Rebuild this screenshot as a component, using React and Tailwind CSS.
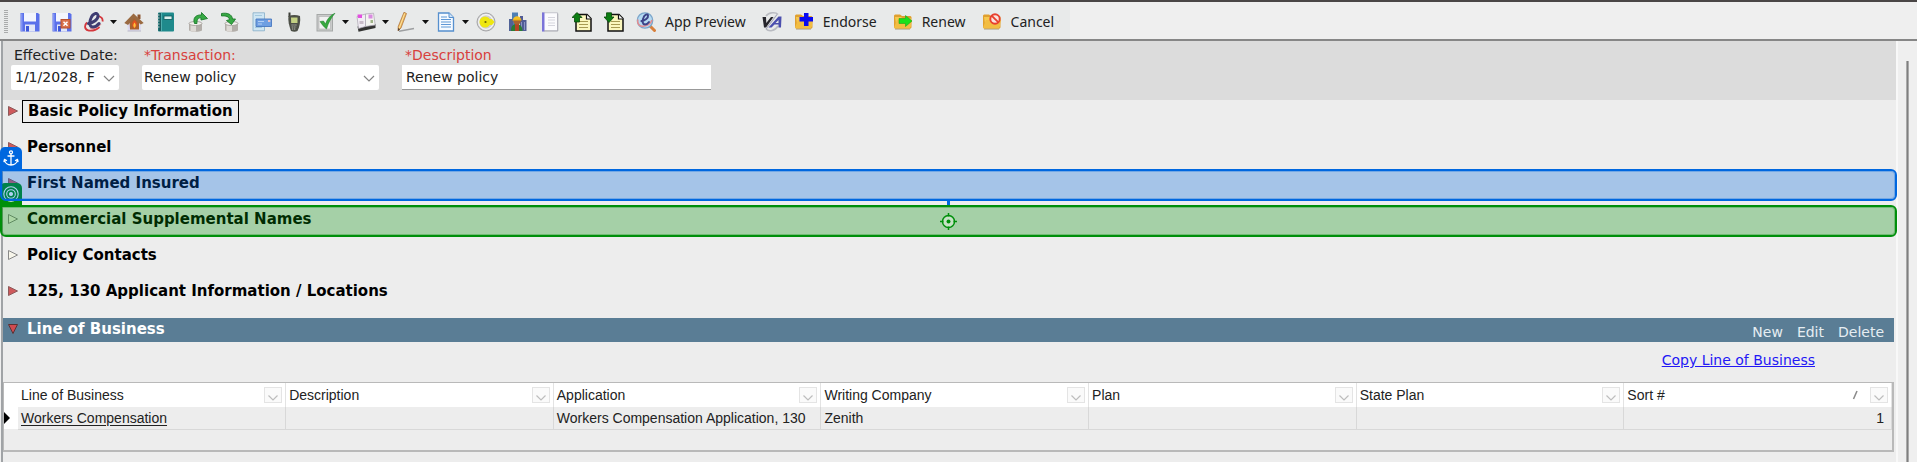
import React from "react";

function Icon({ children }) {
  return (
    <svg viewBox="0 0 20 20" className="h-5 w-5 shrink-0" aria-hidden="true">
      {children}
    </svg>
  );
}

const Floppy = () => (
  <>
    <path d="M0.5 1H18l1.500 1.500V19.500H0.500z" fill="#5a70ea" />
    <path d="M1 1.500h1.500v17.500H1z" fill="#8496f5" />
    <rect x="4" y="1" width="12" height="8.500" fill="#f3f5fd" />
    <rect x="5" y="12.500" width="10" height="7" fill="#e3e7f7" />
    <rect x="6" y="14" width="3" height="5.500" fill="#3f58d8" />
  </>
);

const FolderBase = () => (
  <>
    <path d="M1 3.500l1-1h5l2 1.500h8.500l1 1V15.500l-1.500 1.500H2.500L1 15.500z" fill="#e0a030" />
    <path d="M2 5h6l2 1.500h8v8L3.500 16z" fill="#f6c950" />
    <path d="M1 15.500L4 8h15l-2 8.500H2z" fill="#f2bd42" />
    <path d="M2 17.200h15" stroke="#b9b09a" strokeWidth="1" />
  </>
);

const NotePage = () => (
  <>
    <path d="M4 2.500h11l4 4V19H4z" fill="#fbf7bd" stroke="#111" strokeWidth="1.500" />
    <path d="M14.500 2.500V7H19" fill="#fff" stroke="#111" strokeWidth="1.200" />
    <path d="M7 9.500h9M7 12.500h9M7 15.500h9" stroke="#a89b52" strokeWidth="1.100" />
  </>
);

const Cylinder = () => (
  <>
    <path d="M1 11.500v7c2.500 1.800 10.500 1.800 13 0v-7z" fill="#b3aea9" />
    <path d="M2.500 12v7c2 .8 4 .8 5.500 .6V12.500z" fill="#dedad6" />
    <ellipse cx="7.500" cy="11.500" rx="6.500" ry="2" fill="#f4f1ee" stroke="#9c9893" strokeWidth=".8" />
  </>
);

const icons = {
  save: <Floppy />,
  saveClose: (
    <>
      <Floppy />
      <rect x="8.500" y="7" width="10" height="9.500" rx=".5" fill="#b8502f" />
      <rect x="9.500" y="8" width="8" height="7.500" fill="#d9714c" />
      <path d="M11.500 9.700l4 4M15.500 9.700l-4 4" stroke="#fff" strokeWidth="1.500" />
    </>
  ),
  engine: (
    <>
      <path d="M3 10.500c-3 3-2.500 7 1.500 8 4 .7 8-.8 11-3.500M14.500 4c3 1 4.500 3 4 5.500" fill="none" stroke="#d5383d" strokeWidth="1.800" />
      <path d="M6 16.300c4 1 8-.8 11-4.500" fill="none" stroke="#eba0a1" strokeWidth="1.200" />
      <path d="M4.500 11.500C9 11 14.500 7.500 14 3.500 13.500 0 9 1 7 6c-2 4.500-1.500 9 2 9 2.500 0 4.500-1.500 6-3.500" fill="none" stroke="#3f3d72" strokeWidth="3" strokeLinecap="round" />
    </>
  ),
  home: (
    <>
      <path d="M3 10l7-6 7 6v8.500l-13 .5z" fill="#dcdaf0" />
      <path d="M13.500 2.500h3V7h-3z" fill="#8e5630" />
      <path d="M5.500 9L10 5l5 4.500v8H6z" fill="#a8622f" />
      <path d="M.3 11L9.500 1.500 19.700 11l-3 1.500L10 6.500 4 13z" fill="#9a6b42" />
      <path d="M10.500 8c3 2.500 3 6 0 8.500-3-2-3-5.500 0-8.500z" fill="#e8501d" />
      <path d="M10.500 10.500c1.800 2 1.600 4 0 5.500-1.600-1.500-1.600-3.500 0-5.500z" fill="#fcc23b" />
      <path d="M3.500 19h13.500" stroke="#b8b7c6" />
    </>
  ),
  book: (
    <>
      <rect x="2" y=".5" width="16" height="19" rx="1" fill="#1f8a8c" />
      <path d="M2.500 1H5v18H2.500z" fill="#1a5f62" />
      <path d="M5.500 1v18" stroke="#5bb8b8" strokeWidth=".8" />
      <rect x="8" y="4" width="8" height="3.500" fill="#d9efec" stroke="#0c5659" strokeWidth=".8" />
      <path d="M1 3h2.500M1 6h2.500M1 9h2.500M1 12h2.500M1 15h2.500" stroke="#c8d3d3" strokeWidth="1" />
    </>
  ),
  databaseOut: (
    <>
      <Cylinder />
      <path d="M6.500 11.500C4.500 6 8 2.500 13.500 3V.5l6 6-6.500 1.500V5.800C10.500 5.500 8.500 7.500 9 11.500z" fill="#37a944" stroke="#1c7a2b" strokeWidth=".9" />
    </>
  ),
  databaseIn: (
    <>
      <g transform="translate(4 0)">
        <Cylinder />
      </g>
      <path d="M1.500 1.500C7 .5 12 2 12.500 7h3L11.500 12.500 6.500 8.500l3-.8C9 4.500 6 3.500 1.500 4z" fill="#37a944" stroke="#1c7a2b" strokeWidth=".9" />
    </>
  ),
  printer: (
    <>
      <path d="M1 .8h11.500v18H1z" fill="#cfe6f3" stroke="#8db4cc" strokeWidth=".9" />
      <path d="M3 3.500h7M3 15.500h7" stroke="#a3c8de" strokeWidth="1" />
      <path d="M4 7h15.500v7.500H4z" fill="#6f9fe2" stroke="#4878bf" strokeWidth=".9" />
      <path d="M6 9.500h6M6 12h4" stroke="#b4d0f5" strokeWidth="1" />
      <rect x="16" y="8" width="2.300" height="2" fill="#e9c5c8" />
    </>
  ),
  phone: (
    <>
      <path d="M4.500 .5h2V5h-2z" fill="#3b3d37" />
      <path d="M4.500 4c3.500-1.500 8-1.500 11.500 0 .8 5-.5 11-2.500 15-2 1-4 1-6.500 0C5 14 3.800 8 4.500 4z" fill="#4d5047" />
      <path d="M7 5.500h6.500V11H7.200z" fill="#c3d183" />
      <path d="M7.500 13h5M7.700 15h4.500M8 17h4" stroke="#b8bab2" strokeWidth="1" strokeDasharray="1.200 .7" />
    </>
  ),
  check: (
    <>
      <rect x="1" y="2.500" width="15.500" height="16.500" fill="#c9cbca" stroke="#a5a8a7" />
      <rect x="3" y="4.500" width="11.500" height="12.500" fill="#f1f1f1" stroke="#b0b0b0" strokeWidth=".6" />
      <path d="M4 9.500l3.500-.5 2 3C11 7 14.500 3 19 1.200 15 6 12.500 10.500 10.500 17 8 15 6 12.500 4 9.500z" fill="#36a83f" stroke="#1c7d2b" strokeWidth=".5" />
    </>
  ),
  catalog: (
    <>
      <path d="M1.500 14.500l8.500-2 9.500-.5V16L2.500 19.700z" fill="#333432" />
      <path d="M1 4.500l8.500-2.500v12.500l-7 2z" fill="#f1edf4" stroke="#a9a3b0" strokeWidth=".7" />
      <path d="M9.500 2l8-.8L19.200 13l-9.700 1.500z" fill="#f3f4f0" stroke="#a9a3b0" strokeWidth=".7" />
      <path d="M1.500 2.500h4.500v3.500H2z" fill="#e34fe0" />
      <path d="M12.500 2.500h4v4h-4z" fill="#d98be0" />
      <path d="M14.500 8H17v3h-2.500z" fill="#9fb387" />
      <path d="M3.500 9h4v3h-4z" fill="#c9bcc9" />
    </>
  ),
  pencil: (
    <>
      <path d="M8 .2l2.500 1.300L5 16 2 19l.2-4.500z" fill="#efb356" stroke="#a9713a" strokeWidth=".7" />
      <path d="M8.700 1.500L3.300 16" stroke="#fbe6a5" strokeWidth="1" />
      <path d="M2 19l.2-3L4 17.300z" fill="#4a3a35" />
      <path d="M3 19.200l15-2.700" stroke="#9d9fa1" strokeWidth="1.400" />
    </>
  ),
  document: (
    <>
      <path d="M2.500 1H13l4.500 4.500V19h-15z" fill="#f5faff" stroke="#5690ce" strokeWidth="1.300" />
      <path d="M13 1v4.500h4.500" fill="#cfe3f7" stroke="#5690ce" />
      <path d="M5 5h6M5 7.500h10M5 10h10M5 12.500h10M5 15h10" stroke="#5f98d6" strokeWidth="1.200" />
    </>
  ),
  target: (
    <>
      <circle cx="10" cy="10" r="9" fill="#cfcfd2" stroke="#a5a6a8" strokeWidth="1" />
      <circle cx="10" cy="10" r="7.300" fill="none" stroke="#f7f7f7" strokeWidth="1.200" />
      <circle cx="9" cy="10" r="5.500" fill="#eee711" />
      <path d="M9 7h7l2.500 3-2.500 3H9z" fill="#eee711" />
      <circle cx="9.500" cy="10" r="1.100" fill="#6a6408" />
    </>
  ),
  business: (
    <>
      <path d="M4 .5h6V16H4z" fill="#4e7fb4" />
      <path d="M12 4h3v4h3.500v11H12z" fill="#515c96" />
      <path d="M1 7h4v12H1z" fill="#4f6297" />
      <path d="M13.500 10v8M16.500 10v8" stroke="#9ba5cf" strokeWidth=".8" />
      <path d="M3 19c0-5 2-7 5.500-7s6 2.500 6 7z" fill="#2b7c35" />
      <path d="M7 12h4v7H7z" fill="#b34425" />
      <circle cx="9" cy="9" r="3.600" fill="#a9632f" />
      <path d="M5 8c.3-5 7.700-5 8.200 0z" fill="#f6c325" />
      <path d="M4.500 8.200h9" stroke="#d79b16" strokeWidth="1" />
    </>
  ),
  notebook: (
    <>
      <rect x="2.500" y=".8" width="15" height="18" fill="#fbfbfd" stroke="#b9bac4" strokeWidth=".8" />
      <path d="M2 .5h2.500v19H2z" fill="#7b74d9" />
      <path d="M8 5.500h7M8 8h7M8 11h7M8 13.500h7" stroke="#d5d5dd" strokeWidth="1" />
      <path d="M17.800 1.500V19H4" fill="none" stroke="#a5a6ad" strokeWidth=".8" />
    </>
  ),
  pageUp: (
    <>
      <NotePage />
      <path d="M5 .5L10 5.500H7.500V10h-5V5.500H0z" fill="#0b7d12" stroke="#064808" strokeWidth=".8" />
    </>
  ),
  pageDown: (
    <>
      <NotePage />
      <path d="M2.500 .8h5V5H10l-5 5.500L0 5h2.500z" fill="#0b7d12" stroke="#064808" strokeWidth=".8" />
    </>
  ),
  preview: (
    <>
      <path d="M13 13l5.500 5.500" stroke="#d9803c" strokeWidth="3" strokeLinecap="round" />
      <circle cx="9" cy="8.500" r="7.700" fill="#b5daf2" stroke="#7ba6cb" strokeWidth="1.300" />
      <path d="M2 7.500c-1 3 .5 6 3 6.500 5 1 10-2 11-6" fill="none" stroke="#e58c8f" strokeWidth="1.500" />
      <path d="M5.500 9C9 8.500 12.500 6 12 3.500 11.500 1.500 8.500 2.500 7.300 6 6 9.500 6.500 12.500 9 12.500c1.700 0 3-1 4-2.500" fill="none" stroke="#3d4488" strokeWidth="2" strokeLinecap="round" />
    </>
  ),
  compare: (
    <>
      <path d="M4 4C7 0 14 0 16 2.500M4 17c3 3 9 2 12-3" fill="none" stroke="#b9bbc1" strokeWidth="1.500" />
      <path d="M.5 5h3.500l.3 6L9 5h2.500L4 15.500H2z" fill="#26262c" />
      <path d="M6.500 15.500L16.500 4.500H19.500l-.5 11h-2.500v-3h-4L9.500 15.500zM16.500 8L13.500 11h3z" fill="#4b4fae" />
      <path d="M4 17L15 2.500" stroke="#a5a7b8" strokeWidth="1.100" />
    </>
  ),
  endorse: (
    <>
      <FolderBase />
      <path d="M10 1h4.500v4H19v4.500h-4.500V14H10V9.500H5.500V5H10z" fill="#0a0af0" />
    </>
  ),
  renew: (
    <>
      <FolderBase />
      <path d="M6 6.500h6.500V3.500L19 9l-6.500 5.500v-3H6z" fill="#19e21b" stroke="#1fa11f" strokeWidth=".6" />
    </>
  ),
  cancel: (
    <>
      <FolderBase />
      <circle cx="13" cy="7" r="4.700" fill="#fbe3df" stroke="#e8402f" strokeWidth="1.900" />
      <path d="M9.800 3.900l6.400 6.200" stroke="#e8402f" strokeWidth="1.900" />
    </>
  ),
};

const tools = [
  { icon: "save", label: "Save" },
  { icon: "saveClose", label: "Save and close" },
  { icon: "engine", label: "Actions", menu: true },
  { icon: "home", label: "Home" },
  { icon: "book", label: "Manual" },
  { icon: "databaseOut", label: "Export" },
  { icon: "databaseIn", label: "Import" },
  { icon: "printer", label: "Print" },
  { icon: "phone", label: "Call" },
  { icon: "check", label: "Tasks", menu: true },
  { icon: "catalog", label: "Catalog", menu: true },
  { icon: "pencil", label: "Edit", menu: true },
  { icon: "document", label: "Documents", menu: true },
  { icon: "target", label: "Status" },
  { icon: "business", label: "Business" },
  { icon: "notebook", label: "Notes" },
  { icon: "pageUp", label: "Upload" },
  { icon: "pageDown", label: "Download" },
  { icon: "preview", text: "App Preview" },
  { icon: "compare", label: "Compare" },
  { icon: "endorse", text: "Endorse" },
  { icon: "renew", text: "Renew" },
  { icon: "cancel", text: "Cancel" },
];

function Tool({ tool }) {
  if (tool.text) {
    return (
      <button className="flex shrink-0 items-center gap-[9px] pr-4 text-[14px] leading-5 whitespace-nowrap text-[#222]">
        <Icon>{icons[tool.icon]}</Icon>
        {tool.text}
      </button>
    );
  }
  return (
    <button
      aria-label={tool.label}
      className={tool.menu ? "flex w-10 shrink-0 items-center gap-[6px]" : "flex w-8 shrink-0 items-center"}
    >
      <Icon>{icons[tool.icon]}</Icon>
      {tool.menu && (
        <svg viewBox="0 0 7 4" className="h-1 w-[7px]" aria-hidden="true">
          <path d="M0 0h7L3.500 4z" fill="#111" />
        </svg>
      )}
    </button>
  );
}

function Toolbar() {
  return (
    <header className="flex h-[41px] border-t-2 border-b-2 border-t-[#4a4646] border-b-[#868686] bg-[#efefef] font-['Noto_Sans','Open_Sans',sans-serif]">
      <div className="flex items-center bg-[#e8eaea] pt-[2px] pl-1">
        <span className="mr-3 h-6 w-1 bg-[repeating-linear-gradient(to_bottom,#a9abab_0_1px,#e8eaea_1px_2px)]" />
        {tools.map((tool) => (
          <Tool key={tool.icon} tool={tool} />
        ))}
      </div>
    </header>
  );
}

function Chevron() {
  return (
    <svg viewBox="0 0 12 7" className="pointer-events-none absolute top-[10px] right-1 h-[7px] w-3" aria-hidden="true">
      <path d="M1 1l5 5 5-5" fill="none" stroke="#858585" strokeWidth="1.200" />
    </svg>
  );
}

function PolicyForm() {
  return (
    <form className="flex gap-[23px] bg-[#dcdcdc] pt-1 pb-[10px] pl-2 text-[#222]">
      <div>
        <label htmlFor="effective" className="block pl-[3px] leading-5 whitespace-nowrap">
          Effective Date:
        </label>
        <div className="relative w-[108px]">
          <select id="effective" className="h-[25px] w-full appearance-none rounded-xs bg-white pr-6 pl-1">
            <option>1/1/2028, F</option>
          </select>
          <Chevron />
        </div>
      </div>
      <div>
        <label htmlFor="transaction" className="block pl-[2px] leading-5 text-[#d8403c]">
          *Transaction:
        </label>
        <div className="relative w-[237px]">
          <select id="transaction" className="h-[25px] w-full appearance-none rounded-xs bg-white pr-6 pl-[2px]">
            <option>Renew policy</option>
          </select>
          <Chevron />
        </div>
      </div>
      <div>
        <label htmlFor="description" className="block pl-[3px] leading-5 text-[#d8403c]">
          *Description
        </label>
        <input
          id="description"
          defaultValue="Renew policy"
          className="block h-[25px] w-[309px] border-b border-[#999] bg-white px-1"
        />
      </div>
    </form>
  );
}

function Marker({ kind }) {
  if (kind === "open") {
    return (
      <svg viewBox="0 0 12 12" className="h-3 w-3 shrink-0" aria-hidden="true">
        <path d="M.500 1.500h9L5 10.500z" fill="#cf4b50" stroke="#5c3234" />
      </svg>
    );
  }
  return (
    <svg viewBox="0 0 12 12" className="h-3 w-3 shrink-0" aria-hidden="true">
      {kind === "filled" ? (
        <path d="M.500 1.500l9 4.500-9 4.500z" fill="#cf5a5c" stroke="#8d5a5b" />
      ) : (
        <path d="M.500 1.500l9 4.500-9 4.500z" fill="#f7f5ea" stroke="#888" />
      )}
    </svg>
  );
}

function SectionTitle({ kind, focused, children }) {
  return (
    <h2>
      <button className="flex gap-[2px] pl-[5px] text-left text-[15px] font-bold whitespace-nowrap">
        <span className="pt-[5px]">
          <Marker kind={kind} />
        </span>
        <span className={focused ? "border border-black px-[5px] pb-px leading-5" : "border border-transparent px-1 pb-px leading-5"}>
          {children}
        </span>
      </button>
    </h2>
  );
}

function AnchorHighlight() {
  return (
    <div className="pointer-events-none absolute -top-[25px] -right-px -left-[3px] z-20">
      <div className="flex h-[22px] w-[22px] items-center justify-center rounded-t-[5px] bg-[#0067df]">
        <svg viewBox="0 0 16 16" className="h-4 w-4" fill="none" stroke="#fff" strokeWidth="1.300" strokeLinecap="round" strokeLinejoin="round">
          <circle cx="8" cy="2.300" r="1.500" />
          <path d="M8 3.800V15M5 6h6M1.500 9.500c.3 3.300 3 5.500 6.500 5.500s6.200-2.200 6.500-5.500M1 11.500l.5-2.200 2 1.200M15 11.500l-.5-2.200-2 1.200" />
        </svg>
      </div>
      <div className="h-8 rounded-[6px] rounded-tl-none border-2 border-[#0067df] bg-[#0067df]/30 bg-clip-padding shadow-[inset_0_0_0_1px_rgba(0,103,223,0.300)]" />
      <div className="mx-auto h-1 w-[3px] bg-[#0067df]" />
    </div>
  );
}

function TargetHighlight() {
  return (
    <div className="pointer-events-none absolute -top-[25px] -right-px -left-[3px] z-10">
      <div className="flex h-[22px] w-[22px] items-center justify-center rounded-t-[5px] bg-[#008f0b]">
        <svg viewBox="0 0 16 16" className="h-4 w-4" fill="none" stroke="#fff" strokeWidth="1.100">
          <circle cx="8" cy="8" r="7.200" />
          <circle cx="8" cy="8" r="4.300" />
          <circle cx="8" cy="8" r="1.500" fill="#fff" />
        </svg>
      </div>
      <div className="flex h-8 items-center justify-center rounded-[6px] rounded-tl-none border-2 border-[#008f0b] bg-[#009008]/30 bg-clip-padding shadow-[inset_0_0_0_1px_rgba(0,144,8,0.300)]">
        <svg viewBox="0 0 17 17" className="h-[17px] w-[17px]" fill="none" stroke="#008f0b" strokeWidth="1.500">
          <circle cx="8.500" cy="8.500" r="6" fill="#c6e2c6" />
          <path d="M8.500 0v3.500M8.500 13.500V17M0 8.500h3.500M13.500 8.500H17" />
          <circle cx="8.500" cy="8.500" r="2" fill="#008f0b" stroke="none" />
        </svg>
      </div>
    </div>
  );
}

const sections = [
  { title: "Basic Policy Information", kind: "filled", focused: true },
  { title: "Personnel", kind: "filled" },
  { title: "First Named Insured", kind: "filled", highlight: <AnchorHighlight /> },
  { title: "Commercial Supplemental Names", kind: "hollow", highlight: <TargetHighlight /> },
  { title: "Policy Contacts", kind: "hollow" },
  { title: "125, 130 Applicant Information / Locations", kind: "filled" },
];

const columns = ["Line of Business", "Description", "Application", "Writing Company", "Plan", "State Plan", "Sort #"];

function BusinessTable() {
  return (
    <div className="mr-[2px] border-t border-r-2 border-b-2 border-l border-[#b9b9b9] pb-5 font-['Liberation_Sans',Arial,sans-serif] text-[14px] text-[#222]">
      <table className="w-full table-fixed border-collapse">
        <thead>
          <tr className="h-6 bg-white">
            <th className="w-[14px] p-0" aria-label="Current row" />
            {columns.map((name) => (
              <th key={name} className="border-r border-[#e3e3e3] p-0 text-left font-normal">
                <div className="flex items-center pr-[3px] pl-[3px]">
                  <span className="flex-1 leading-6">{name}</span>
                  {name === "Sort #" && (
                    <svg viewBox="0 0 6 10" className="mr-3 h-[10px] w-[6px]" aria-hidden="true">
                      <path d="M5 1L1.500 9" stroke="#8a8a8a" strokeWidth="1.500" />
                    </svg>
                  )}
                  <button
                    aria-label={"Filter " + name}
                    className="flex h-4 w-[18px] items-end justify-center border border-[#e4e4e4] bg-[#fafafa] pb-px"
                  >
                    <svg viewBox="0 0 10 6" className="h-[6px] w-[10px]" aria-hidden="true">
                      <path d="M.500 .500L5 5 9.500 .500" fill="none" stroke="#bdbdbd" strokeWidth="1.200" />
                    </svg>
                  </button>
                </div>
              </th>
            ))}
          </tr>
        </thead>
        <tbody>
          <tr className="h-[22px]">
            <td className="bg-white p-0">
              <svg viewBox="0 0 6 12" className="h-3 w-[6px]" aria-hidden="true">
                <path d="M0 0l6 6-6 6z" fill="#000" />
              </svg>
            </td>
            <td className="border-r border-b border-[#d8d8d8] p-0 pl-[3px] leading-5">
              <a href="#workers-compensation" className="underline underline-offset-2">
                Workers Compensation
              </a>
            </td>
            <td className="border-r border-b border-[#d8d8d8] p-0" />
            <td className="border-r border-b border-[#d8d8d8] p-0 pl-[3px] leading-5 whitespace-nowrap">
              Workers Compensation Application, 130
            </td>
            <td className="border-r border-b border-[#d8d8d8] p-0 pl-[3px] leading-5">Zenith</td>
            <td className="border-r border-b border-[#d8d8d8] p-0" />
            <td className="border-r border-b border-[#d8d8d8] p-0" />
            <td className="border-r border-b border-[#d8d8d8] p-0 pr-[7px] text-right leading-5">1</td>
          </tr>
        </tbody>
      </table>
    </div>
  );
}

export default function App() {
  return (
    <div className="flex min-h-screen flex-col bg-[#efefef] font-['DejaVu_Sans',Verdana,sans-serif] text-[14px] text-black">
      <Toolbar />
      <div className="flex flex-1">
        <main className="ml-px min-w-0 flex-1 border-r-2 border-l-2 border-r-[#f8f8f8] border-l-[#a0a3a6] bg-[#ededed]">
          <PolicyForm />
          {sections.map((section) => (
            <section key={section.title} className="relative h-9">
              <SectionTitle kind={section.kind} focused={section.focused}>
                {section.title}
              </SectionTitle>
              {section.highlight}
            </section>
          ))}
          <section className="pt-[2px]">
            <div className="mr-[2px] flex h-6 justify-between bg-[#5a7d95] text-white">
              <SectionTitle kind="open">Line of Business</SectionTitle>
              <div className="flex gap-[14px] pt-1 pr-[10px] leading-5 text-[#e6edf2]">
                <button>New</button>
                <button>Edit</button>
                <button>Delete</button>
              </div>
            </div>
            <div className="pt-2 pr-[81px] pb-3 text-right leading-5">
              <a href="#copy" className="text-[#2318f5] underline">
                Copy Line of Business
              </a>
            </div>
            <BusinessTable />
          </section>
        </main>
        <aside className="flex w-[19px] shrink-0 pt-5 pl-2">
          <div className="w-[3px] border-x border-[#aaa] bg-[#7f7f7f]" />
        </aside>
      </div>
    </div>
  );
}
